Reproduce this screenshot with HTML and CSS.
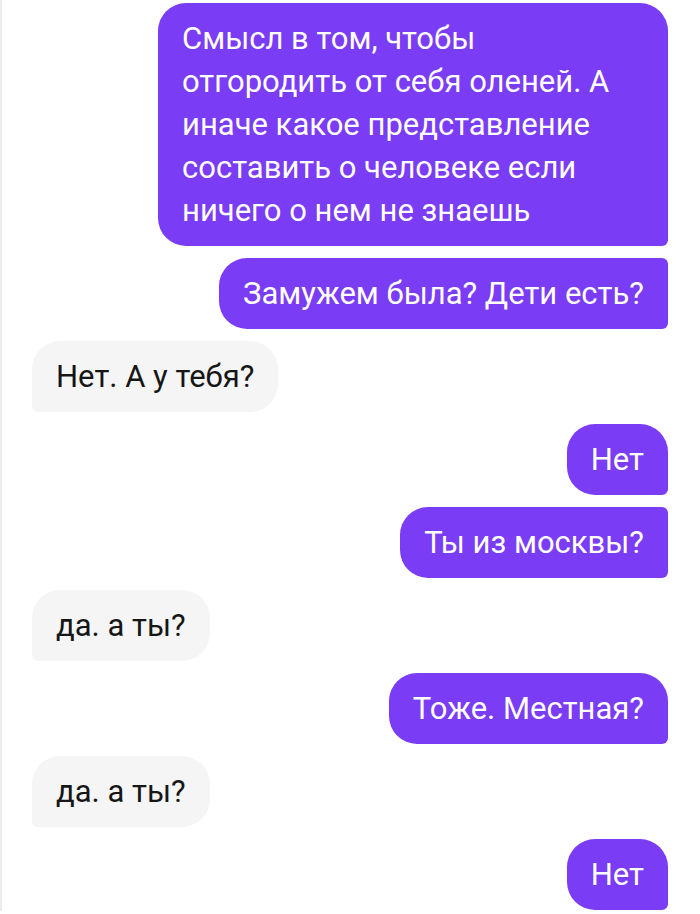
FILE: index.html
```html
<!DOCTYPE html>
<html lang="ru">
<head>
<meta charset="utf-8">
<link rel="stylesheet" href="styles.css">
</head>
<body>
<div class="chat">
  <div class="msg out first">Смысл в том, чтобы отгородить от себя оленей. А иначе какое представление составить о человеке если ничего о нем не знаешь</div>
  <div class="msg out cont">Замужем была? Дети есть?</div>
  <div class="msg in">Нет. А у тебя?</div>
  <div class="msg out first">Нет</div>
  <div class="msg out cont">Ты из москвы?</div>
  <div class="msg in">да. а ты?</div>
  <div class="msg out first">Тоже. Местная?</div>
  <div class="msg in">да. а ты?</div>
  <div class="msg out first">Нет</div>
</div>
</body>
</html>
```
FILE: styles.css
```css
html, body {
  margin: 0;
  padding: 0;
  background: #ffffff;
}
body {
  font-family: Roboto, "Noto Sans", sans-serif;
}
.chat {
  display: flex;
  flex-direction: column;
  gap: 12px;
  padding: 3px 32px 0 30px;
  border-left: 2px solid #ececec;
  min-height: 911px;
  box-sizing: border-box;
}
.msg {
  font-size: 31px;
  letter-spacing: 0;
  line-height: 43px;
  padding: 14px 24px;
  max-width: 462px;
  border-radius: 28px;
}
.out {
  align-self: flex-end;
  background: #7a3cf5;
  color: #ffffff;
  border-bottom-right-radius: 6px;
}
.out.cont {
  border-top-right-radius: 6px;
}
.in {
  align-self: flex-start;
  background: #f5f5f5;
  color: #161616;
  border-bottom-left-radius: 6px;
}
```
